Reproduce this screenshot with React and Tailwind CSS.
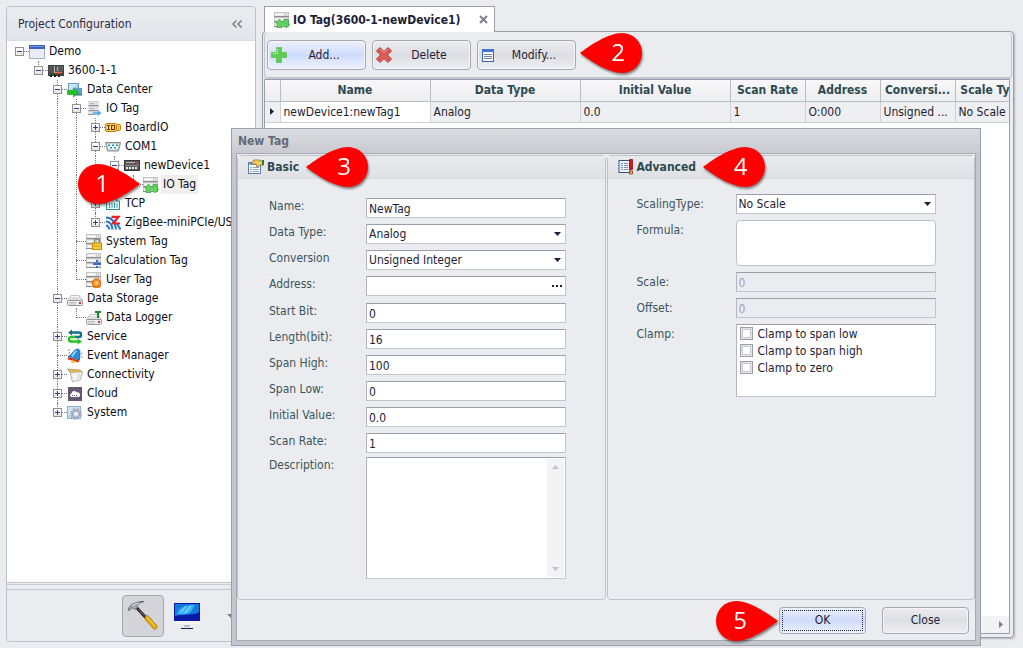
import React, { useState } from "react";

/* ---------- icons ---------- */

const Svg = ({ children, className = "h-4 w-4", viewBox = "0 0 16 16" }) => (
  <svg className={`shrink-0 ${className}`} viewBox={viewBox} fill="none" aria-hidden="true">
    {children}
  </svg>
);

// grey three-row server used by every tag icon
const Server = () => (
  <>
    <path d="M0 0h15v15H0z" fill="#c4c4c4" />
    <path d="M1 1h13v3H1zM1 6h13v3H1zM1 11h13v3H1z" fill="#ececec" />
    <path d="M0 4.5h15M0 9.5h15M0 14.5h15" stroke="#8c8c8c" />
    <path d="M2 2.5h7M2 7.5h7M2 12.5h7" stroke="#fafafa" />
    <path d="M10.5 1v3M12.5 1v3M10.5 6v3M12.5 6v3" stroke="#c9c9c9" />
  </>
);

const Drive = () => (
  <>
    <path d="M4 4.5h8L15.500 9.500H0.500z" fill="#dedee0" stroke="#b0b0b3" strokeWidth="0.7" />
    <path d="M4 5.5h8" stroke="#f6f6f6" />
    <rect x="0.5" y="9.5" width="15" height="5" rx="1" fill="#eeeef0" stroke="#98989c" />
    <path d="M2 11.5h7M2 13h7" stroke="#c0c0c5" />
    <rect x="12" y="11" width="2" height="2" fill="#c23a4a" />
  </>
);

const icons = {
  window: (
    <Svg>
      <rect x="0.5" y="1.5" width="15" height="13" fill="#e9ecf5" stroke="#a3aed0" />
      <path d="M0 1h16v4H0z" fill="#3d5fc4" />
      <path d="M1 2h14v1H1z" fill="#7893e2" />
    </Svg>
  ),
  controller: (
    <Svg>
      <path d="M0 2h16v11H0z" fill="#444446" />
      <path d="M1 3h5v7H1z" fill="#525256" />
      <path d="M8 3h7v5H8z" fill="#5c5c60" />
      <path d="M6.5 3v7M9.5 4v4" stroke="#b9b9bd" />
      <path d="M7 9.5h7" stroke="#ff6a1f" strokeWidth="1.500" />
      <path d="M2 12h2v2H2zM6 12h2v2H6zM10 12h2v2h-2z" fill="#1d1d1f" />
    </Svg>
  ),
  dataCenter: (
    <Svg>
      <rect x="1.500" y="1.500" width="10" height="9" fill="#a9cdea" stroke="#6b9cc4" />
      <path d="M2 2h9L2 9z" fill="#cfe5f6" />
      <path d="M8 6h7v6H8z" fill="#5b9fd0" />
      <path d="M8 12h7v1.500H8z" fill="#3f6f96" />
      <path d="M0.500 8.500h6V6l5 4.500-5 4.500v-2.500h-6z" fill="#1fc41f" stroke="#18a018" strokeWidth="0.600" />
    </Svg>
  ),
  server: (
    <Svg>
      <path d="M2 0h11v14H2z" fill="#cfcfd2" />
      <path d="M2 1h11v3H2zM2 6h11v3H2zM2 11h11v2H2z" fill="#e4e4e7" />
      <path d="M3 4.500h9M3 9.500h9M2 13.500h9" stroke="#8f8f95" />
      <path d="M4 2.500h4M4 7.500h4" stroke="#b0b0b6" />
      <path d="M6.500 11h5V8.500l4 3.500-4 3.500V13h-5z" fill="#4ba3e3" stroke="#cfe7fa" strokeWidth="0.600" />
    </Svg>
  ),
  board: (
    <Svg>
      <rect x="0.500" y="3.500" width="11" height="8" rx="1.500" fill="#ffce62" stroke="#c97a07" />
      <rect x="11.500" y="4.500" width="4" height="6" rx="1" fill="#ffc23d" stroke="#c97a07" />
      <path d="M2 5.500h3M3.500 5.500v4M2 9.500h3" stroke="#6b3c00" />
      <rect x="6.500" y="5.500" width="3" height="4" stroke="#6b3c00" />
    </Svg>
  ),
  serial: (
    <Svg>
      <path d="M0.500 3.500h15l-2 8.500h-11z" fill="#c9ccd0" stroke="#85898f" />
      <path d="M2.200 5h11.600l-1.500 5.500H3.700z" fill="#f7f9fa" />
      <path d="M3 5.500h2v1.500H3zM7 5.500h2v1.500H7zM11 5.500h2v1.500h-2zM5 8h2v1.500H5zM9 8h2v1.500H9z" fill="#1897a8" />
    </Svg>
  ),
  device: (
    <Svg>
      <rect x="0.500" y="2.500" width="15" height="10" fill="#5a5a5e" stroke="#37373a" />
      <path d="M2 4.500h9" stroke="#b5b5b9" />
      <rect x="12" y="4" width="2" height="2" fill="#e53935" />
      <path d="M2 9h2v2H2zM5 9h2v2H5zM8 9h2v2H8zM11 9h2v2h-2z" fill="#e4e4e7" />
      <path d="M1 7.500h14" stroke="#8a8a8e" />
    </Svg>
  ),
  ioTag: (
    <Svg>
      <Server />
      <path d="M3 15.500V11H1.800L5.500 7 9 11H7.800v4.500z" fill="#5fd45f" stroke="#3fa647" strokeWidth="0.800" />
      <path d="M10 7.500V12H8.500l3.700 4L15.800 12h-1.500V7.500z" fill="#5fd45f" stroke="#3fa647" strokeWidth="0.800" />
      <path d="M6.500 10l4.500 4" stroke="#5fd45f" strokeWidth="2" />
    </Svg>
  ),
  ethernet: (
    <Svg>
      <path d="M1.500 5V13.500h13V5h-3V2.500h-7V5z" fill="#f2fbfd" stroke="#228c9c" />
      <path d="M4.500 7v5M7 7v5M9.500 7v5M12 7v5" stroke="#2c9aab" />
    </Svg>
  ),
  zigbee: (
    <Svg>
      <path d="M1 2.500c5 0 9 4 10 12M1 6.500c3.500 0 6 3 6.500 8M1 10.500c2 0 3 2 3.500 4" stroke="#2878c8" strokeWidth="2" />
      <path d="M6.500 1.800h7L8 8.500h7" stroke="#e8202a" strokeWidth="2.200" />
      <path d="M12 9l3.500 5.500" stroke="#2878c8" strokeWidth="2" />
    </Svg>
  ),
  systemTag: (
    <Svg>
      <Server />
      <path d="M8.500 9V7.500a2.500 2.500 0 015 0V9" stroke="#8a8a8a" strokeWidth="1.500" />
      <rect x="6.500" y="9" width="9" height="6.500" fill="#f7cf3c" stroke="#c48a08" />
      <path d="M7 12h8" stroke="#d9a012" />
    </Svg>
  ),
  calcTag: (
    <Svg>
      <Server />
      <path d="M7 10h8v2H7zM10 7h2v2h-2zM10 13h2v2h-2z" fill="#2f6be0" />
    </Svg>
  ),
  userTag: (
    <Svg>
      <Server />
      <circle cx="10.500" cy="11" r="4.300" fill="#ff8c1a" stroke="#d96500" />
      <circle cx="10.500" cy="11" r="1.800" fill="#ffd9a3" />
      <path d="M7 15h7" stroke="#e87400" strokeWidth="1.500" />
    </Svg>
  ),
  drive: (
    <Svg>
      <Drive />
    </Svg>
  ),
  logger: (
    <Svg>
      <Drive />
      <path d="M9 1h6v2h-2v5h-2V3H9z" fill="#178a2d" />
    </Svg>
  ),
  service: (
    <Svg>
      <path d="M4 3.500h8a2 2 0 012 2v0.500a2 2 0 01-2 2H8" stroke="#0f7288" strokeWidth="2.400" />
      <path d="M5 0.500L1 3.500l4 3z" fill="#0f7288" />
      <path d="M9 8H4a2 2 0 00-2 2v0.500a2 2 0 002 2h7.500" stroke="#24c424" strokeWidth="2.400" />
      <path d="M10.500 9.500L15 12.500l-4.500 3z" fill="#24c424" />
    </Svg>
  ),
  bell: (
    <Svg>
      <path d="M10 1c2 0 3 1 3 3l-0.500 8L1 8.500C5 7.500 6 2 10 1z" fill="#2b8fd8" stroke="#155a94" strokeWidth="0.800" />
      <path d="M9.500 3C7 4 6.500 6.500 5 8.500" stroke="#a7dcff" strokeWidth="1.500" />
      <path d="M1 9l11.500 3.500-1 2L1 11.500z" fill="#d63a1e" />
      <path d="M4 12l4 1-1 2.500-3-1z" fill="#ffc933" />
      <path d="M1 3l2-1.500M1.500 5.500L3 4M14 6l1.500-1M14 9h1.500" stroke="#6a8fae" />
    </Svg>
  ),
  connectivity: (
    <Svg>
      <path d="M0.500 2l13 1 2 3H4z" fill="#f2b632" stroke="#8d8f8a" strokeWidth="0.600" />
      <path d="M0.500 2L4 6l1.500 8" stroke="#a5a7a2" />
      <path d="M3 5.500l12.500-1L13.500 13l-8 2z" fill="#e6e8e3" stroke="#9b9d98" strokeWidth="0.600" />
      <path d="M5 7l5-0.500-0.500 6-3 1z" fill="#f7f8f5" />
    </Svg>
  ),
  cloud: (
    <Svg>
      <path d="M1 1h14v14H1z" fill="#655674" />
      <path d="M4.500 11a1.800 1.800 0 010-3.500 2.800 2.800 0 015.300-1A2.400 2.400 0 0111.500 11z" fill="#fff" />
      <path d="M5 9.500h6" stroke="#655674" strokeDasharray="1 1" />
    </Svg>
  ),
  gear: (
    <Svg>
      <rect x="0.500" y="1.500" width="13" height="12" fill="#bcd6ee" stroke="#8fb0cf" />
      <path d="M1 2h12L1 11z" fill="#cfe2f3" />
      <circle cx="9" cy="9" r="4.500" stroke="#a9b2bf" strokeWidth="3" strokeDasharray="2.300 1.200" />
      <circle cx="9" cy="9" r="3.600" fill="#c9d0da" stroke="#8f9aa9" />
      <circle cx="9" cy="9" r="1.600" fill="#f5f7fa" />
    </Svg>
  ),
};

const HammerIcon = () => (
  <Svg className="h-8 w-8" viewBox="0 0 32 32">
    <path d="M10 8l11 12" stroke="#1e1e22" strokeWidth="3" />
    <path d="M11 8.500l10 11" stroke="#8b8b92" strokeWidth="0.800" />
    <path d="M13 12l2 2" stroke="#a33" />
    <path
      d="M1 10c1-3 3-6 7-7 3-1 6-2 9-1.500-3 1-6 2-7 4l0.500 2-2.500 2-3-2-2.500 3z"
      fill="#a7a9b0"
      stroke="#4c4d55"
      strokeWidth="0.700"
    />
    <path d="M5 6c2-2 4-2.500 7-3" stroke="#e8e9ee" />
    <path d="M20 18l8 9" stroke="#a97c05" strokeWidth="5" strokeLinecap="round" />
    <path d="M20 18l8 9" stroke="#e6ad14" strokeWidth="3.600" strokeLinecap="round" />
    <path d="M20.500 17.500l7.500 8.500" stroke="#ffd95e" strokeWidth="1" />
  </Svg>
);

const MonitorIcon = () => (
  <Svg className="h-[28px] w-[28px]" viewBox="0 0 28 28">
    <path d="M1 1h26v18H1z" fill="#0a1aa8" />
    <path d="M2 2h24v8c-5 4-14 1-24 4z" fill="#1478dc" />
    <path d="M4 12C6 5 13 3 22 3c-3 3-2 7-8 9-4 1-7 0-10 0z" fill="#38b4f4" />
    <path d="M8 10l5-6M12 11l6-7" stroke="#9fe2ff" />
    <path d="M1 19h26v3H1z" fill="#f4f4f6" />
    <path d="M11 23h6v2h-6z" fill="#b9bac0" />
    <path d="M8 26.500h12" stroke="#101c50" />
  </Svg>
);

const PlusIcon = () => (
  <Svg>
    <path d="M5.500 0.500h5v5h5v5h-5v5h-5v-5h-5v-5h5z" fill="#5ecb52" stroke="#6cc765" />
    <path d="M6.500 2v4.500H2" stroke="#a5eb9c" />
  </Svg>
);

const CrossIcon = () => (
  <Svg>
    <path d="M4 0.500l4 4 4-4L15.500 4l-4 4 4 4-3.500 3.500-4-4-4 4L0.500 12l4-4-4-4z" fill="#dc5a58" stroke="#bb3c3a" />
    <path d="M4 2L8 6l4-4" stroke="#f39a97" />
  </Svg>
);

const FormIcon = () => (
  <Svg>
    <rect x="1.500" y="2.500" width="11" height="12" fill="#f4f7fd" stroke="#3a62b5" />
    <path d="M1 2h12v3H1z" fill="#3f74d6" />
    <path d="M3 7.500h8M3 9.500h8M3 11.500h8" stroke="#7a83a0" />
  </Svg>
);

const BasicIcon = () => (
  <Svg>
    <rect x="0.500" y="3.500" width="12" height="11" fill="#fff" stroke="#5c7eb5" />
    <path d="M1 4h11v2H1z" fill="#7ea3dd" />
    <path d="M2 8.500h2M5 8.500h6M2 10.500h2M5 10.500h6M2 12.500h2M5 12.500h6" stroke="#8aa5cf" />
    <path d="M3 5l3-4h5l2 1h3v4h-3L9 8 8 5z" fill="#f3cf62" stroke="#8b6914" strokeWidth="0.800" />
    <path d="M14 1h2v5h-2z" fill="#2e7a4a" />
  </Svg>
);

const AdvancedIcon = () => (
  <Svg>
    <rect x="1" y="1.500" width="11" height="12" fill="#eef3fb" stroke="#2f5496" />
    <path d="M3 4.500h2M6 4.500h4M3 6.500h2M6 6.500h4M3 8.500h2M6 8.500h4M3 10.500h2M6 10.500h4" stroke="#7890b8" />
    <path d="M11.500 0.500h3v10h-3z" fill="#e81010" stroke="#7d0a0a" strokeWidth="0.700" />
    <path d="M11.500 12h3v3h-3z" fill="#f5b83d" stroke="#8b1a0a" strokeWidth="0.700" />
  </Svg>
);

/* ---------- numbered callout ---------- */

const Callout = ({ number, pointTo = "left", className = "" }) => (
  <div
    className={`pointer-events-none absolute z-20 flex h-10 w-[62px] drop-shadow-[1px_2px_1px_rgba(0,0,0,0.45)] ${
      pointTo === "left" ? "justify-end" : "justify-start"
    } ${className}`}
  >
    <svg
      className={`absolute inset-0 h-10 w-[62px] ${pointTo === "left" ? "" : "rotate-180"}`}
      viewBox="0 0 62 40"
      aria-hidden="true"
    >
      <path d="M0 20C9 13 28 0 42 0a20 20 0 010 40C28 40 9 27 0 20z" fill="#fe0000" />
    </svg>
    <span className="relative w-12 text-center font-['Open_Sans',sans-serif] text-2xl leading-[38px] text-white">
      {number}
    </span>
  </div>
);

/* ---------- project tree ---------- */

const tree = [
  {
    label: "Demo",
    icon: "window",
    children: [
      {
        label: "3600-1-1",
        icon: "controller",
        children: [
          {
            label: "Data Center",
            icon: "dataCenter",
            children: [
              {
                label: "IO Tag",
                icon: "server",
                children: [
                  { label: "BoardIO", icon: "board", collapsed: true },
                  {
                    label: "COM1",
                    icon: "serial",
                    children: [
                      {
                        label: "newDevice1",
                        icon: "device",
                        children: [{ label: "IO Tag", icon: "ioTag", selected: true }],
                      },
                    ],
                  },
                  { label: "TCP", icon: "ethernet", collapsed: true },
                  { label: "ZigBee-miniPCIe/USB", icon: "zigbee", collapsed: true },
                ],
              },
              { label: "System Tag", icon: "systemTag" },
              { label: "Calculation Tag", icon: "calcTag" },
              { label: "User Tag", icon: "userTag" },
            ],
          },
          {
            label: "Data Storage",
            icon: "drive",
            children: [{ label: "Data Logger", icon: "logger" }],
          },
          { label: "Service", icon: "service", collapsed: true },
          { label: "Event Manager", icon: "bell" },
          { label: "Connectivity", icon: "connectivity", collapsed: true },
          { label: "Cloud", icon: "cloud", collapsed: true },
          { label: "System", icon: "gear", collapsed: true },
        ],
      },
    ],
  },
];

const TreeNode = ({ node, guides = [], isLast, isRoot }) => {
  const hasToggle = Boolean(node.children || node.collapsed);

  return (
    <li>
      <div className="flex h-[19px] items-center">
        {guides.map((line, i) => (
          <span key={i} className="flex h-full w-[19px] shrink-0 justify-center">
            {line && <span className="h-full border-l border-dotted border-[#777]" />}
          </span>
        ))}
        <span className="relative flex h-full w-[19px] shrink-0 items-center justify-center">
          {!isRoot && (
            <span
              className={`absolute left-[9px] top-0 border-l border-dotted border-[#777] ${isLast ? "h-[10px]" : "h-full"}`}
            />
          )}
          <span className="absolute left-[9px] top-[9px] w-[10px] border-t border-dotted border-[#777]" />
          {hasToggle && (
            <button
              aria-label={node.collapsed ? `Expand ${node.label}` : `Collapse ${node.label}`}
              className="relative h-[9px] w-[9px] border border-[#919191] bg-gradient-to-b from-white to-[#e4e4e4]"
            >
              <span className="absolute left-px top-[3px] h-px w-[5px] bg-[#24429c]" />
              {node.collapsed && <span className="absolute left-[3px] top-px h-[5px] w-px bg-[#24429c]" />}
            </button>
          )}
        </span>
        <span className="flex w-4 shrink-0">{icons[node.icon]}</span>
        <span
          className={`ml-0.5 whitespace-nowrap px-0.5 leading-[19px] text-[#0c0c18] ${node.selected ? "bg-[#efeff0]" : ""}`}
        >
          {node.label}
        </span>
      </div>
      {node.children && (
        <ul>
          {node.children.map((child, i) => (
            <TreeNode
              key={child.label}
              node={child}
              guides={[...guides, !isRoot && !isLast]}
              isLast={i === node.children.length - 1}
            />
          ))}
        </ul>
      )}
    </li>
  );
};

const Sidebar = () => (
  <aside className="flex w-[250px] shrink-0 flex-col overflow-hidden rounded border border-[#bfc1c9] bg-[#ebecef]">
    <div className="flex h-[34px] items-center justify-between border-b border-[#dcdde2] bg-gradient-to-b from-[#ebecef] to-[#e4e5ea] pl-[11px] pr-3">
      <h1 className="text-[#2b2b45]">Project Configuration</h1>
      <button aria-label="Collapse panel" className="text-[#7b7e8c]">
        <Svg className="h-3 w-3" viewBox="0 0 12 12">
          <path d="M5.500 2.500L2 6l3.500 3.500M10.500 2.500L7 6l3.500 3.500" stroke="currentColor" strokeWidth="1.500" />
        </Svg>
      </button>
    </div>
    <nav className="flex-1 bg-white pl-[3px] pt-px">
      <ul>
        {tree.map((node) => (
          <TreeNode key={node.label} node={node} isRoot isLast />
        ))}
      </ul>
    </nav>
    <div className="border-b border-t border-[#c3c5cd] bg-[#ebecef]">
      <div className="mt-px h-[5px] border-t border-[#c9cbd3]" />
    </div>
    <div className="flex h-[51px] items-center justify-end pr-5">
      <button
        aria-label="Configure"
        className="mr-[9px] flex h-[42px] w-[42px] items-center justify-center rounded-sm border border-[#a5a7b3] bg-[#d4d5da]"
      >
        <HammerIcon />
      </button>
      <button aria-label="Monitor" className="mr-[26px]">
        <MonitorIcon />
      </button>
      <button aria-label="More" className="h-1 w-2">
        <Svg className="h-1 w-2" viewBox="0 0 8 4">
          <path d="M0 0h8L4 4z" fill="#7b7e8c" />
        </Svg>
      </button>
    </div>
  </aside>
);

/* ---------- tag list ---------- */

const ToolbarButton = ({ icon, children, active }) => (
  <button
    className={`flex h-[30px] w-[99px] items-center rounded-sm border border-[#a5a7b3] bg-gradient-to-b pl-[3px] pr-1 text-[#1e1e38] shadow-[inset_0_0_0_1px_#f6f6f8] ${
      active ? "from-[#eef2ff] via-[#cfdbfc] to-[#f0f4ff]" : "from-[#ececf0] via-[#dddee3] to-[#eeeef2]"
    }`}
  >
    {icon}
    <span className="flex-1 text-center">{children}</span>
  </button>
);

const columns = [
  { title: "Name", value: "newDevice1:newTag1" },
  { title: "Data Type", value: "Analog" },
  { title: "Initial Value", value: "0.0" },
  { title: "Scan Rate", value: "1" },
  { title: "Address", value: "O:000" },
  { title: "Conversi...", value: "Unsigned ..." },
  { title: "Scale Type", value: "No Scale" },
];

const TagPage = () => (
  <main className="flex min-w-0 flex-1 flex-col pb-1">
    <div className="relative z-10 -mb-px flex pl-0.5">
      <div className="flex h-[26px] items-center border border-b-0 border-[#9b9eab] bg-white pl-[9px] pr-1.5">
        {icons.ioTag}
        <h2 className="ml-[3px] font-bold text-[#1e1e38]">IO Tag(3600-1-newDevice1)</h2>
        <button aria-label="Close tab" className="ml-[19px] text-[#7b7e8c]">
          <Svg className="h-[9px] w-[9px]" viewBox="0 0 9 9">
            <path d="M1 1l7 7M8 1L1 8" stroke="currentColor" strokeWidth="2" />
          </Svg>
        </button>
      </div>
    </div>
    <div className="flex flex-1 flex-col rounded-sm border border-[#9b9eab] p-px shadow-[1px_1px_2px_rgba(120,122,135,0.5)]">
      <div className="flex h-[46px] items-center gap-1.5 rounded-sm border-x border-b-2 border-[#c3c5cd] pl-0.5">
        <ToolbarButton icon={<PlusIcon />} active>
          Add...
        </ToolbarButton>
        <ToolbarButton icon={<CrossIcon />}>Delete</ToolbarButton>
        <ToolbarButton icon={<FormIcon />}>Modify...</ToolbarButton>
      </div>
      <div className="mb-0.5 mr-0.5 flex min-w-0 flex-1 flex-col border border-[#9b9eab] bg-white">
        <div className="w-0 min-w-full flex-1 overflow-hidden">
          <table className="w-[765px] table-fixed border-collapse">
            <colgroup>
              <col className="w-[15px]" />
              <col className="w-[150px]" />
              <col className="w-[150px]" />
              <col className="w-[150px]" />
              <col className="w-[75px]" />
              <col className="w-[75px]" />
              <col className="w-[75px]" />
              <col className="w-[75px]" />
            </colgroup>
            <thead>
              <tr className="h-[21px] bg-gradient-to-b from-[#f8f8f9] to-[#ededf0] text-[#2d4a50]">
                <th className="border-b border-r border-[#b9bbc5]" />
                {columns.map((col) => (
                  <th key={col.title} className="whitespace-nowrap border-b border-r border-[#b9bbc5] font-bold">
                    {col.title}
                  </th>
                ))}
              </tr>
            </thead>
            <tbody>
              <tr className="h-[21px] bg-[#eeeff2] text-[#1e1e30]">
                <td className="border-b border-r border-[#cfd1d8]">
                  <Svg className="mx-auto h-[7px] w-1" viewBox="0 0 4 7">
                    <path d="M0 0l4 3.500L0 7z" fill="#1e1e38" />
                  </Svg>
                </td>
                {columns.map((col, i) => (
                  <td
                    key={col.title}
                    className={`whitespace-nowrap border-b border-r border-[#cfd1d8] pl-[3px] ${i === 0 ? "bg-white" : ""}`}
                  >
                    {col.value}
                  </td>
                ))}
              </tr>
            </tbody>
          </table>
        </div>
        <div className="flex h-[17px] items-center justify-end bg-[#f3f3f5] pr-1.5">
          <Svg className="h-[7px] w-1" viewBox="0 0 4 7">
            <path d="M0 0l4 3.500L0 7z" fill="#7b7e8c" />
          </Svg>
        </div>
      </div>
    </div>
  </main>
);

/* ---------- new tag dialog ---------- */

const boxClass = "w-[200px] border border-[#c3c5cd] border-l-[#b3b5c0] border-t-[#9b9eab] bg-white text-[#1e1e38] outline-none";

const Row = ({ id, label, tall, children }) => (
  <div className="flex items-start">
    <label htmlFor={id} className={`text-[#3a555b] ${tall ? "w-[99px] leading-5" : "w-[97px] leading-4"}`}>
      {label}
    </label>
    {children}
  </div>
);

const TextBox = ({ id, ...rest }) => (
  <input
    id={id}
    type="text"
    className={`h-5 px-0.5 pt-0.5 disabled:bg-[#ebecef] disabled:text-[#a3a1b0] ${boxClass}`}
    {...rest}
  />
);

const DropDown = ({ id, options }) => (
  <div className="relative">
    <select id={id} className={`h-5 appearance-none px-0.5 ${boxClass}`}>
      {options.map((opt) => (
        <option key={opt}>{opt}</option>
      ))}
    </select>
    <Svg className="pointer-events-none absolute right-[5px] top-2 h-1 w-[7px]" viewBox="0 0 7 4">
      <path d="M0 0h7L3.500 4z" fill="#1e1e38" />
    </Svg>
  </div>
);

const Group = ({ icon, title, callout, children }) => (
  <section className="flex-1 rounded-sm border border-[#c0c2ca]">
    <div className="flex h-[23px] items-center border-b border-[#dadbe0] bg-gradient-to-b from-[#e9eaed] to-[#e0e1e5] pl-2.5">
      {icon}
      <div className="relative ml-[3px]">
        <h3 className="font-bold text-[#2d4a50]">{title}</h3>
        {callout}
      </div>
    </div>
    {children}
  </section>
);

const clampOptions = ["Clamp to span low", "Clamp to span high", "Clamp to zero"];

const NewTagDialog = ({ onClose }) => (
  <div
    role="dialog"
    aria-label="New Tag"
    className="absolute left-[231px] right-[42px] top-[128px] z-10 border border-[#9b9eab] bg-[#c5c7cf]"
  >
    <div className="flex h-6 items-center bg-gradient-to-b from-[#dcdde1] to-[#c8cad1] pl-1.5">
      <h2 className="font-bold text-[#646977]">New Tag</h2>
    </div>
    <div className="mx-1 mb-1 border border-[#a7a9b5] bg-[#ebecef] pt-px">
      <div className="flex h-[445px] gap-px">
        <Group
          icon={<BasicIcon />}
          title="Basic"
          callout={<Callout number="3" className="-top-3 left-[39px]" />}
        >
          <div className="flex flex-col gap-1.5 pl-[31px] pt-[19px]">
            <Row id="name" label="Name:">
              <TextBox id="name" defaultValue="NewTag" />
            </Row>
            <Row id="dataType" label="Data Type:">
              <DropDown id="dataType" options={["Analog", "Discrete", "Text"]} />
            </Row>
            <Row id="conversion" label="Conversion">
              <DropDown id="conversion" options={["Unsigned Integer", "Integer"]} />
            </Row>
            <Row id="address" label="Address:">
              <div className="relative h-[21px]">
                <TextBox id="address" />
                <button aria-label="Browse address" className="absolute right-1 top-[9px] flex gap-0.5">
                  <span className="h-0.5 w-0.5 bg-[#1e1e38]" />
                  <span className="h-0.5 w-0.5 bg-[#1e1e38]" />
                  <span className="h-0.5 w-0.5 bg-[#1e1e38]" />
                </button>
              </div>
            </Row>
            <Row id="startBit" label="Start Bit:">
              <TextBox id="startBit" defaultValue="0" />
            </Row>
            <Row id="length" label="Length(bit):">
              <TextBox id="length" defaultValue="16" />
            </Row>
            <Row id="spanHigh" label="Span High:">
              <TextBox id="spanHigh" defaultValue="100" />
            </Row>
            <Row id="spanLow" label="Span Low:">
              <TextBox id="spanLow" defaultValue="0" />
            </Row>
            <Row id="initialValue" label="Initial Value:">
              <TextBox id="initialValue" defaultValue="0.0" />
            </Row>
            <div className="flex flex-col gap-1">
              <Row id="scanRate" label="Scan Rate:">
                <TextBox id="scanRate" defaultValue="1" />
              </Row>
              <Row id="description" label="Description:">
                <div className="relative">
                  <textarea id="description" className={`block h-[122px] resize-none ${boxClass}`} />
                  <div className="absolute bottom-0.5 right-0.5 top-0.5 flex w-[17px] flex-col items-center justify-between bg-[#f3f3f5] py-1.5">
                    <Svg className="h-1 w-[7px]" viewBox="0 0 7 4">
                      <path d="M0 4h7L3.500 0z" fill="#c0c1c8" />
                    </Svg>
                    <Svg className="h-1 w-[7px]" viewBox="0 0 7 4">
                      <path d="M0 0h7L3.500 4z" fill="#c0c1c8" />
                    </Svg>
                  </div>
                </div>
              </Row>
            </div>
          </div>
        </Group>
        <Group
          icon={<AdvancedIcon />}
          title="Advanced"
          callout={<Callout number="4" className="-top-3 left-[66px]" />}
        >
          <div className="flex flex-col gap-1.5 pl-[29px] pt-[15px]">
            <Row id="scalingType" label="ScalingType:" tall>
              <DropDown id="scalingType" options={["No Scale", "Linear"]} />
            </Row>
            <Row id="formula" label="Formula:" tall>
              <textarea
                id="formula"
                className="block h-[46px] w-[200px] resize-none rounded-sm border border-[#bfc1c9] bg-white outline-none"
              />
            </Row>
            <Row id="scale" label="Scale:" tall>
              <TextBox id="scale" defaultValue="0" disabled />
            </Row>
            <Row id="offset" label="Offset:" tall>
              <TextBox id="offset" defaultValue="0" disabled />
            </Row>
            <div className="flex items-start">
              <span id="clamp" className="w-[99px] leading-5 text-[#3a555b]">
                Clamp:
              </span>
              <div role="group" aria-labelledby="clamp" className={`h-[73px] pl-[3px] ${boxClass}`}>
                {clampOptions.map((opt) => (
                  <label key={opt} className="flex h-[17px] items-center gap-[5px]">
                    <input
                      type="checkbox"
                      className="h-[13px] w-[13px] appearance-none border border-[#9b9eab] bg-white shadow-[inset_0_0_0_1px_#e4e5ea,inset_0_0_0_2px_#c9cbd3] checked:bg-[#24429c]"
                    />
                    {opt}
                  </label>
                ))}
              </div>
            </div>
          </div>
        </Group>
      </div>
      <div className="flex h-10 items-center justify-end gap-4 pr-1.5">
        <div className="relative">
          <Callout number="5" pointTo="right" className="-top-1.5 right-[88px]" />
          <button
            onClick={onClose}
            className="h-[27px] w-[87px] rounded-sm border border-[#a5a7b3] bg-gradient-to-b from-[#eef2ff] via-[#cfdbfc] to-[#f0f4ff] p-0.5 text-[#1e1e38]"
          >
            <span className="flex h-full items-center justify-center border border-dotted border-[#1e1e38]">OK</span>
          </button>
        </div>
        <button
          onClick={onClose}
          className="h-[27px] w-[87px] rounded-sm border border-[#a5a7b3] bg-gradient-to-b from-[#ececf0] via-[#dddee3] to-[#eeeef2] text-[#1e1e38] shadow-[inset_0_0_0_1px_#f6f6f8]"
        >
          Close
        </button>
      </div>
    </div>
  </div>
);

const App = () => {
  const [open, setOpen] = useState(true);

  return (
    <div className="relative flex min-h-screen gap-1.5 overflow-hidden bg-[#ebecef] py-1.5 pl-1.5 pr-[9px] font-['DejaVu_Sans_Condensed','DejaVu_Sans',sans-serif] text-xs">
      <Sidebar />
      <TagPage />
      {open && <NewTagDialog onClose={() => setOpen(false)} />}
      <Callout number="1" pointTo="right" className="left-[78px] top-[164px]" />
      <Callout number="2" className="left-[580px] top-[33px]" />
    </div>
  );
};

export default App;
